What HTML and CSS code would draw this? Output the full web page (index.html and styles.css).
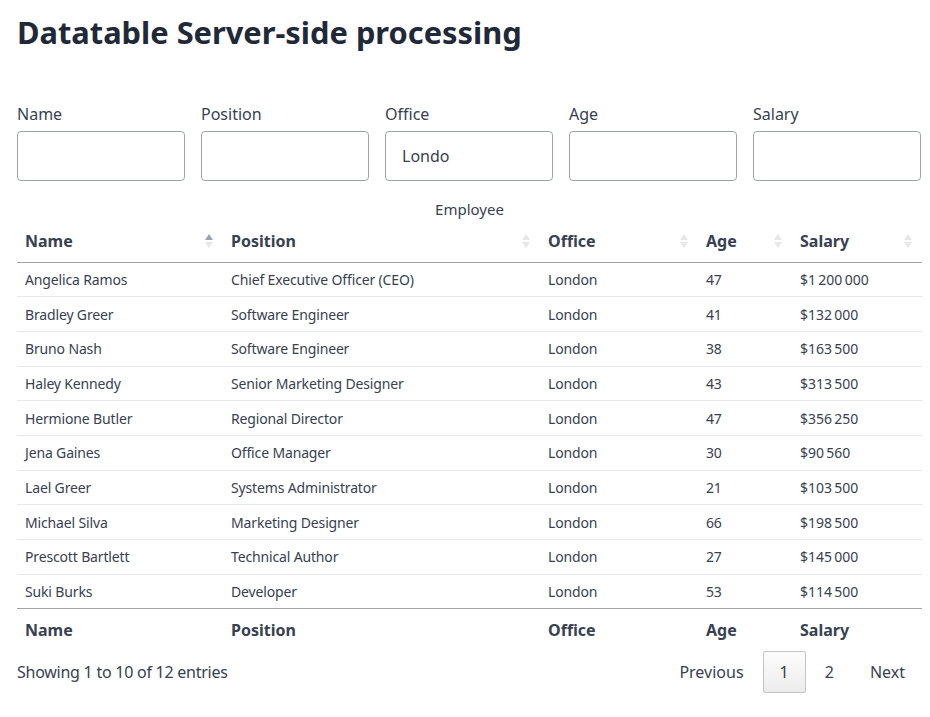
FILE: index.html
```html
<!DOCTYPE html>
<html lang="en">
<head>
<meta charset="utf-8">
<title>Datatable Server-side processing</title>
<link rel="stylesheet" href="styles.css">
</head>
<body>
<div class="page">
  <h1 class="title">Datatable Server-side processing</h1>
  <div class="filters">
    <label class="field"><span class="field-label">Name</span><input class="field-input" type="text"></label>
    <label class="field"><span class="field-label">Position</span><input class="field-input" type="text"></label>
    <label class="field"><span class="field-label">Office</span><input class="field-input" type="text" value="Londo"></label>
    <label class="field"><span class="field-label">Age</span><input class="field-input" type="text"></label>
    <label class="field"><span class="field-label">Salary</span><input class="field-input" type="text"></label>
  </div>
  <table class="dt">
    <caption class="dt-caption">Employee</caption>
    <colgroup>
      <col class="c-name"><col class="c-pos"><col class="c-off"><col class="c-age"><col class="c-sal">
    </colgroup>
    <thead>
      <tr>
        <th class="sortable asc">Name<span class="sort"><i class="up"></i><i class="down"></i></span></th>
        <th class="sortable">Position<span class="sort"><i class="up"></i><i class="down"></i></span></th>
        <th class="sortable">Office<span class="sort"><i class="up"></i><i class="down"></i></span></th>
        <th class="sortable">Age<span class="sort"><i class="up"></i><i class="down"></i></span></th>
        <th class="sortable">Salary<span class="sort"><i class="up"></i><i class="down"></i></span></th>
      </tr>
    </thead>
    <tbody>
      <tr><td>Angelica Ramos</td><td>Chief Executive Officer (CEO)</td><td>London</td><td>47</td><td>$1&#8239;200&#8239;000</td></tr>
      <tr><td>Bradley Greer</td><td>Software Engineer</td><td>London</td><td>41</td><td>$132&#8239;000</td></tr>
      <tr><td>Bruno Nash</td><td>Software Engineer</td><td>London</td><td>38</td><td>$163&#8239;500</td></tr>
      <tr><td>Haley Kennedy</td><td>Senior Marketing Designer</td><td>London</td><td>43</td><td>$313&#8239;500</td></tr>
      <tr><td>Hermione Butler</td><td>Regional Director</td><td>London</td><td>47</td><td>$356&#8239;250</td></tr>
      <tr><td>Jena Gaines</td><td>Office Manager</td><td>London</td><td>30</td><td>$90&#8239;560</td></tr>
      <tr><td>Lael Greer</td><td>Systems Administrator</td><td>London</td><td>21</td><td>$103&#8239;500</td></tr>
      <tr><td>Michael Silva</td><td>Marketing Designer</td><td>London</td><td>66</td><td>$198&#8239;500</td></tr>
      <tr><td>Prescott Bartlett</td><td>Technical Author</td><td>London</td><td>27</td><td>$145&#8239;000</td></tr>
      <tr><td>Suki Burks</td><td>Developer</td><td>London</td><td>53</td><td>$114&#8239;500</td></tr>
    </tbody>
    <tfoot>
      <tr><th>Name</th><th>Position</th><th>Office</th><th>Age</th><th>Salary</th></tr>
    </tfoot>
  </table>
  <div class="dt-bottom">
    <div class="dt-info">Showing 1 to 10 of 12 entries</div>
    <div class="pager">
      <span class="pg">Previous</span>
      <span class="pg current">1</span>
      <span class="pg">2</span>
      <span class="pg">Next</span>
    </div>
  </div>
</div>
</body>
</html>
```
FILE: styles.css
```css
* { box-sizing: border-box; }
html, body { margin: 0; padding: 0; background: #fff; }
body {
  font-family: "Noto Sans", "Open Sans", "DejaVu Sans", sans-serif;
  color: #374151;
}
.page { padding: 0 9px 0 17px; }
.title {
  margin: 0;
  padding-top: 12px;
  height: 102px;
  font-size: 30.8px;
  line-height: 40px;
  font-weight: 700;
  color: #1f2937;
}
.filters {
  display: grid;
  grid-template-columns: repeat(5, 168px);
  column-gap: 16px;
}
.field { display: flex; flex-direction: column; }
.field-label {
  font-size: 16px;
  line-height: 24px;
  height: 29px;
  color: #374151;
}
.field-input {
  height: 50px;
  width: 168px;
  border: 1px solid #9ca3af;
  border-radius: 4px;
  padding: 0 16px;
  font: inherit;
  font-size: 16px;
  color: #374151;
  outline: none;
}
.dt {
  width: 905px;
  border-collapse: collapse;
  table-layout: fixed;
  margin-top: 17px;
}
.dt-caption {
  font-size: 15px;
  line-height: 22px;
  padding-bottom: 2px;
  color: #374151;
}
.c-name { width: 206px; }
.c-pos { width: 317px; }
.c-off { width: 158px; }
.c-age { width: 94px; }
.c-sal { width: 130px; }
.dt th {
  text-align: left;
  font-size: 16px;
  font-weight: 700;
  color: #374151;
  padding: 0 8px;
}
.dt thead th {
  height: 40px;
  padding-bottom: 1px;
  border-bottom: 1px solid #a3a3a3;
  position: relative;
}
.dt td {
  font-size: 14px;
  line-height: 19px;
  padding: 7px 8px;
  height: 34.7px;
  border-bottom: 1px solid #e5e7eb;
  white-space: nowrap;
  letter-spacing: -0.15px;
}
.dt tbody tr:last-child td { border-bottom: 1px solid #a3a3a3; }
.dt tfoot th { height: 42px; padding-top: 0; }
.sort {
  position: absolute;
  right: 10px;
  top: 12px;
  display: flex;
  flex-direction: column;
  gap: 2px;
}
.sort i {
  display: block;
  width: 0; height: 0;
  border-left: 4px solid transparent;
  border-right: 4px solid transparent;
}
.sort .up { border-bottom: 6px solid #e5e7eb; }
.sort .down { border-top: 6px solid #e5e7eb; }
.asc .sort .up { border-bottom-color: #9ca3af; }
.dt-bottom {
  display: flex;
  justify-content: space-between;
  align-items: center;
  width: 905px;
}
.dt-info { font-size: 16px; color: #374151; letter-spacing: -0.25px; }
.pager { display: flex; align-items: center; }
.pg {
  display: inline-block;
  font-size: 16px;
  line-height: 20px;
  padding: 10px 16px;
  margin-left: 2px;
  border: 1px solid transparent;
  border-radius: 2px;
  color: #374151;
}
.pg.current {
  border-color: #c4c4c4;
  background: linear-gradient(#fdfdfd, #ececec);
  min-width: 43px;
  text-align: center;
}
```
